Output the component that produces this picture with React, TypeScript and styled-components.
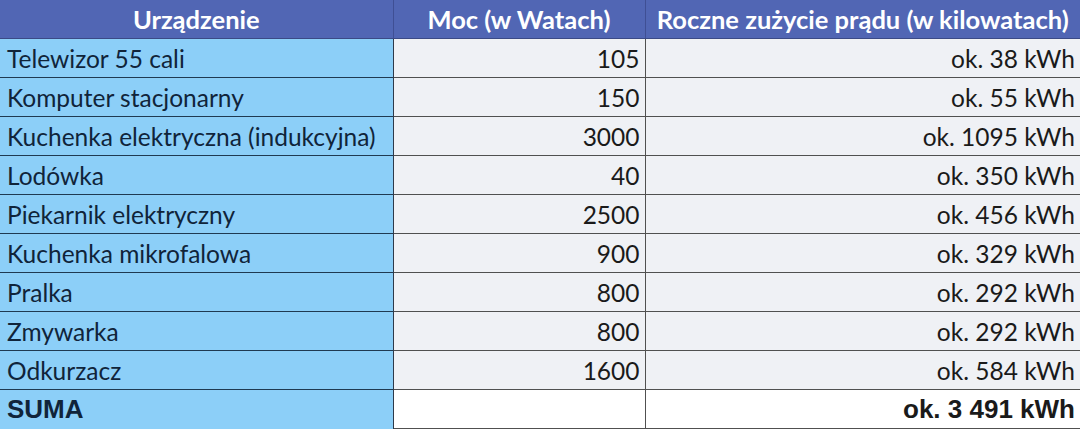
import React from 'react';
import styled, { createGlobalStyle } from 'styled-components';

const GlobalStyle = createGlobalStyle`
  html, body {
    margin: 0;
    padding: 0;
    background: #ffffff;
  }
`;

const rows = [
  { name: 'Telewizor 55 cali', power: '105', usage: 'ok. 38 kWh' },
  { name: 'Komputer stacjonarny', power: '150', usage: 'ok. 55 kWh' },
  { name: 'Kuchenka elektryczna (indukcyjna)', power: '3000', usage: 'ok. 1095 kWh' },
  { name: 'Lodówka', power: '40', usage: 'ok. 350 kWh' },
  { name: 'Piekarnik elektryczny', power: '2500', usage: 'ok. 456 kWh' },
  { name: 'Kuchenka mikrofalowa', power: '900', usage: 'ok. 329 kWh' },
  { name: 'Pralka', power: '800', usage: 'ok. 292 kWh' },
  { name: 'Zmywarka', power: '800', usage: 'ok. 292 kWh' },
  { name: 'Odkurzacz', power: '1600', usage: 'ok. 584 kWh' },
];

const App = () => {
  return (
    <>
      <GlobalStyle />
      <Table>
        <colgroup>
          <col style={{ width: 393 }} />
          <col style={{ width: 252 }} />
          <col />
        </colgroup>
        <thead>
          <tr>
            <HeadCell>Urządzenie</HeadCell>
            <HeadCell>Moc (w Watach)</HeadCell>
            <HeadCell>Roczne zużycie prądu (w kilowatach)</HeadCell>
          </tr>
        </thead>
        <tbody>
          {rows.map((r) => (
            <tr key={r.name}>
              <NameCell>{r.name}</NameCell>
              <ValueCell>{r.power}</ValueCell>
              <ValueCell>{r.usage}</ValueCell>
            </tr>
          ))}
          <tr>
            <NameCell $total>SUMA</NameCell>
            <ValueCell $total></ValueCell>
            <ValueCell $total>ok. 3 491 kWh</ValueCell>
          </tr>
        </tbody>
      </Table>
    </>
  );
};

export default App;

const Table = styled.table`
  width: 1080px;
  border-collapse: collapse;
  table-layout: fixed;
  font-family: Lato, 'Open Sans', sans-serif;
`;

const HeadCell = styled.th`
  height: 38px;
  padding: 0 4px;
  background: #5166b4;
  color: #ffffff;
  font-size: 25.5px;
  font-weight: 700;
  text-align: center;
  border-bottom: 1px solid #3b4a86;
  border-right: 1px solid #3f4f94;
  white-space: nowrap;
  overflow: hidden;

  &:last-child {
    border-right: none;
  }
`;

const NameCell = styled.td<{ $total?: boolean }>`
  height: 38px;
  padding: 0 7px;
  background: #8ccff8;
  color: #10243a;
  font-size: ${(p) => (p.$total ? '26px' : '24.5px')};
  font-family: ${(p) => (p.$total ? "'Liberation Sans', Arial, sans-serif" : 'inherit')};
  font-weight: ${(p) => (p.$total ? 700 : 400)};
  border-top: 1px solid #1f3a52;
  border-right: 1px solid #2e3a4a;
  white-space: nowrap;
  overflow: hidden;
`;

const ValueCell = styled.td<{ $total?: boolean }>`
  height: 38px;
  padding: 0 5px;
  background: ${(p) => (p.$total ? '#ffffff' : '#eff1f5')};
  color: #1a1a1a;
  text-align: right;
  font-size: ${(p) => (p.$total ? '26px' : '24.5px')};
  font-family: ${(p) => (p.$total ? "'Liberation Sans', Arial, sans-serif" : 'inherit')};
  font-weight: ${(p) => (p.$total ? 700 : 400)};
  border-top: 1px solid #505050;
  border-right: 1px solid #505050;
  border-bottom: ${(p) => (p.$total ? '1px solid #505050' : 'none')};
  white-space: nowrap;

  &:last-child {
    border-right: none;
  }
`;
